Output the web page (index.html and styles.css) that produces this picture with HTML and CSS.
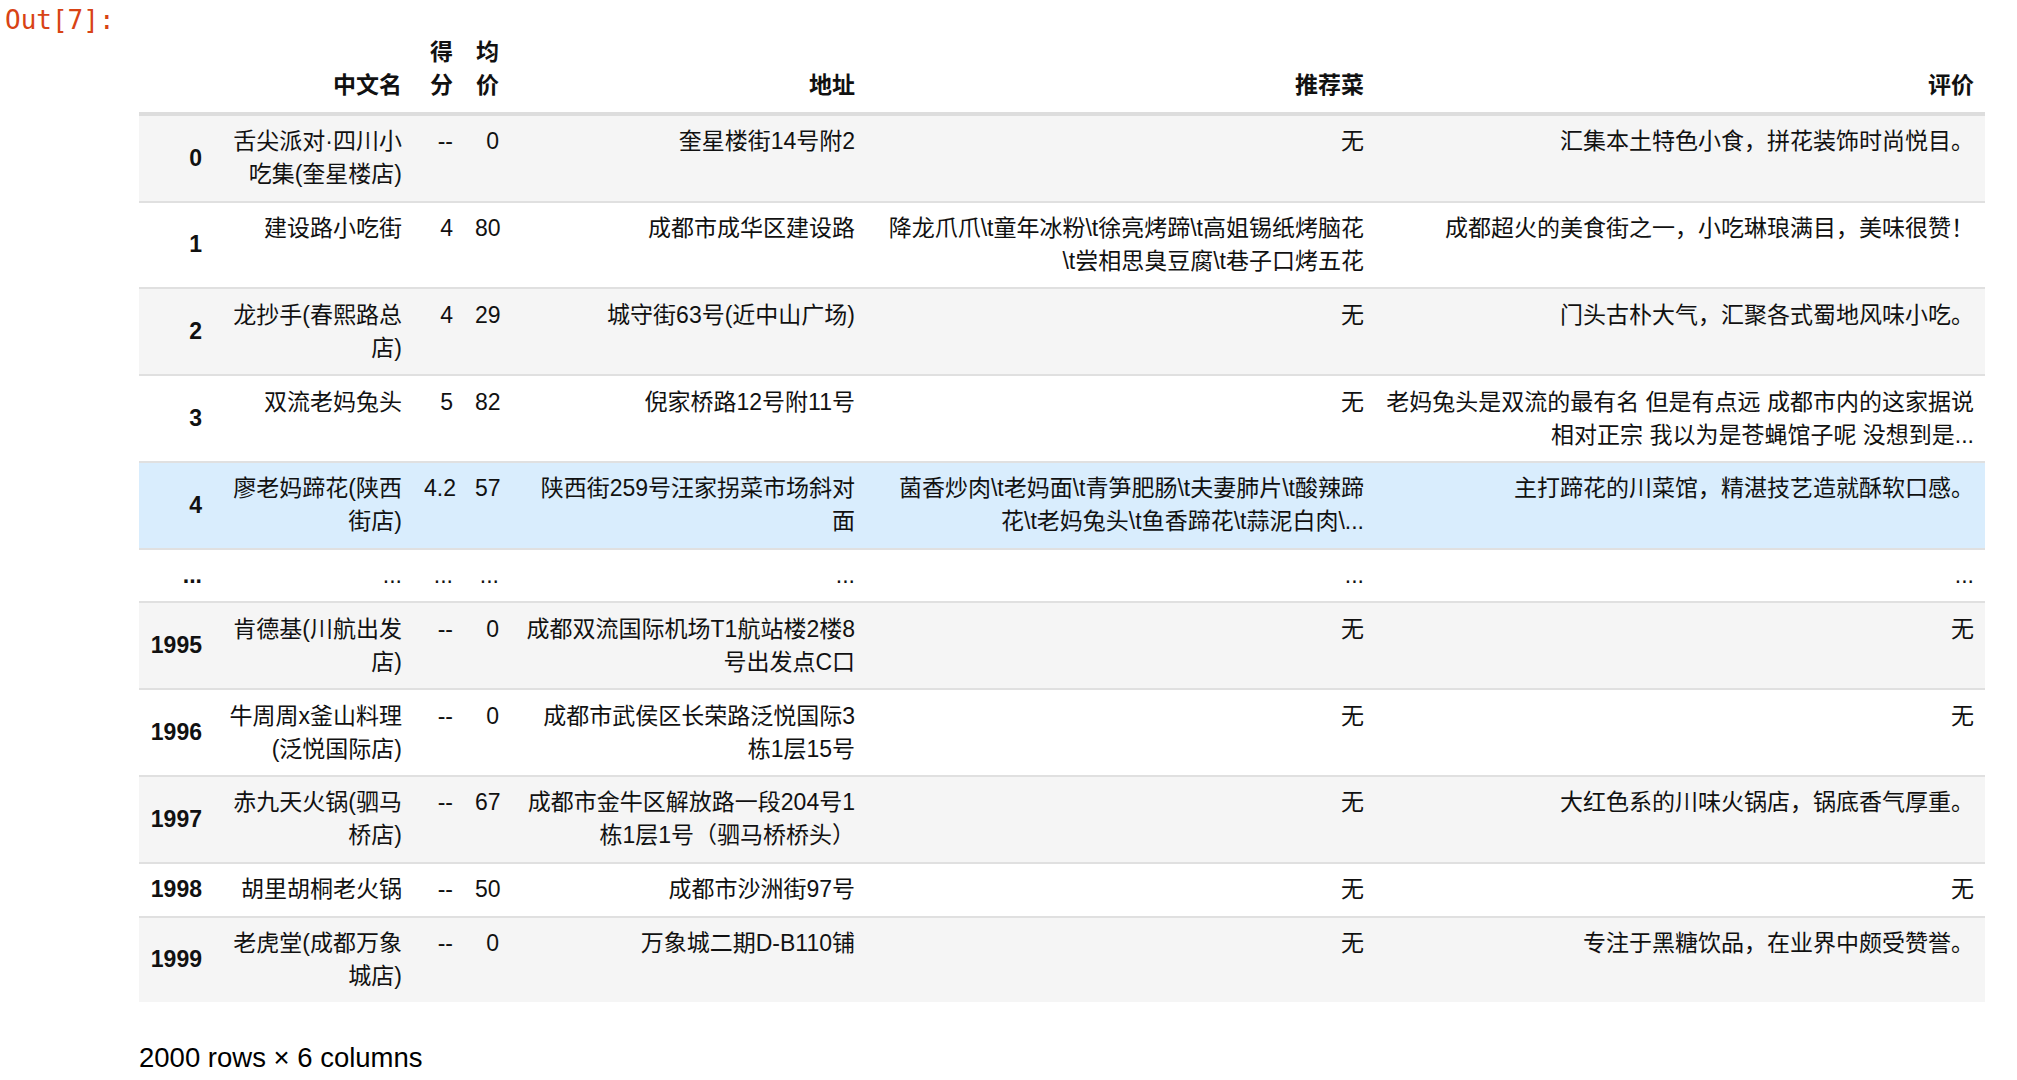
FILE: index.html
```html
<!DOCTYPE html>
<html lang="zh">
<head>
<meta charset="utf-8">
<title>Out[7]</title>
<link rel="stylesheet" href="styles.css">
</head>
<body>
<div class="cell">
  <div class="prompt">Out[7]:</div>
  <div class="output">
    <table class="dataframe">
      <thead>
        <tr>
          <th class="c-idx"></th>
          <th class="c-name">中文名</th>
          <th class="c-score">得<br>分</th>
          <th class="c-price">均<br>价</th>
          <th class="c-addr">地址</th>
          <th class="c-dish">推荐菜</th>
          <th class="c-review">评价</th>
        </tr>
      </thead>
      <tbody>
        <tr>
          <th>0</th>
          <td>舌尖派对·四川小<br>吃集(奎星楼店)</td>
          <td>--</td>
          <td>0</td>
          <td>奎星楼街14号附2</td>
          <td>无</td>
          <td>汇集本土特色小食，拼花装饰时尚悦目。</td>
        </tr>
        <tr>
          <th>1</th>
          <td>建设路小吃街</td>
          <td>4</td>
          <td>80</td>
          <td>成都市成华区建设路</td>
          <td>降龙爪爪\t童年冰粉\t徐亮烤蹄\t高姐锡纸烤脑花<br>\t尝相思臭豆腐\t巷子口烤五花</td>
          <td>成都超火的美食街之一，小吃琳琅满目，美味很赞！</td>
        </tr>
        <tr>
          <th>2</th>
          <td>龙抄手(春熙路总<br>店)</td>
          <td>4</td>
          <td>29</td>
          <td>城守街63号(近中山广场)</td>
          <td>无</td>
          <td>门头古朴大气，汇聚各式蜀地风味小吃。</td>
        </tr>
        <tr>
          <th>3</th>
          <td>双流老妈兔头</td>
          <td>5</td>
          <td>82</td>
          <td>倪家桥路12号附11号</td>
          <td>无</td>
          <td>老妈兔头是双流的最有名 但是有点远 成都市内的这家据说<br>相对正宗 我以为是苍蝇馆子呢 没想到是...</td>
        </tr>
        <tr class="is-hover">
          <th>4</th>
          <td>廖老妈蹄花(陕西<br>街店)</td>
          <td>4.2</td>
          <td>57</td>
          <td>陕西街259号汪家拐菜市场斜对<br>面</td>
          <td>菌香炒肉\t老妈面\t青笋肥肠\t夫妻肺片\t酸辣蹄<br>花\t老妈兔头\t鱼香蹄花\t蒜泥白肉\...</td>
          <td>主打蹄花的川菜馆，精湛技艺造就酥软口感。</td>
        </tr>
        <tr>
          <th>...</th>
          <td>...</td>
          <td>...</td>
          <td>...</td>
          <td>...</td>
          <td>...</td>
          <td>...</td>
        </tr>
        <tr>
          <th>1995</th>
          <td>肯德基(川航出发<br>店)</td>
          <td>--</td>
          <td>0</td>
          <td>成都双流国际机场T1航站楼2楼8<br>号出发点C口</td>
          <td>无</td>
          <td>无</td>
        </tr>
        <tr>
          <th>1996</th>
          <td>牛周周x釜山料理<br>(泛悦国际店)</td>
          <td>--</td>
          <td>0</td>
          <td>成都市武侯区长荣路泛悦国际3<br>栋1层15号</td>
          <td>无</td>
          <td>无</td>
        </tr>
        <tr>
          <th>1997</th>
          <td>赤九天火锅(驷马<br>桥店)</td>
          <td>--</td>
          <td>67</td>
          <td>成都市金牛区解放路一段204号1<br>栋1层1号（驷马桥桥头）</td>
          <td>无</td>
          <td>大红色系的川味火锅店，锅底香气厚重。</td>
        </tr>
        <tr>
          <th>1998</th>
          <td>胡里胡桐老火锅</td>
          <td>--</td>
          <td>50</td>
          <td>成都市沙洲街97号</td>
          <td>无</td>
          <td>无</td>
        </tr>
        <tr>
          <th>1999</th>
          <td>老虎堂(成都万象<br>城店)</td>
          <td>--</td>
          <td>0</td>
          <td>万象城二期D-B110铺</td>
          <td>无</td>
          <td>专注于黑糖饮品，在业界中颇受赞誉。</td>
        </tr>
      </tbody>
    </table>
    <p class="shape">2000 rows × 6 columns</p>
  </div>
</div>
</body>
</html>
```

FILE: styles.css
```css
html, body {
  margin: 0;
  padding: 0;
  background: #ffffff;
}

.cell {
  display: flex;
  align-items: flex-start;
  padding-left: 5px;
}

.prompt {
  flex: none;
  width: 134px;
  margin-top: 7px;
  font-family: "DejaVu Sans Mono", "Liberation Mono", monospace;
  font-size: 26px;
  line-height: 26px;
  color: #d84315;
}

.output {
  flex: none;
  width: 1846px;
  padding-top: 27px;
}

.dataframe {
  width: 1846px;
  table-layout: fixed;
  border-collapse: collapse;
  border-spacing: 0;
  font-family: "Liberation Sans", "Noto Sans CJK SC", sans-serif;
  font-size: 23px;
  line-height: 33px;
  color: #111111;
}

.dataframe th,
.dataframe td {
  box-sizing: border-box;
  padding: 9.4px 11px;
  text-align: right;
  white-space: nowrap;
}

.dataframe thead th {
  vertical-align: bottom;
  font-weight: bold;
}

.dataframe thead tr {
  border-bottom: 4px solid #dddddd;
}

.dataframe tbody tr + tr {
  border-top: 2px solid #e0e0e0;
}

.dataframe tbody tr:nth-child(odd) {
  background: #f5f5f5;
}

.dataframe tbody tr.is-hover {
  background: #d9edfd;
}

.dataframe tbody td {
  vertical-align: top;
}

.dataframe tbody th {
  vertical-align: middle;
  font-weight: bold;
}

.c-idx { width: 74px; }
.c-name { width: 200px; }
.c-score { width: 51px; }
.c-price { width: 46px; }
.c-addr { width: 356px; }
.c-dish { width: 509px; }
.c-review { width: 610px; }

.shape {
  margin: 40px 0 0;
  font-family: "Liberation Sans", sans-serif;
  font-size: 27.5px;
  color: #000000;
}
```
